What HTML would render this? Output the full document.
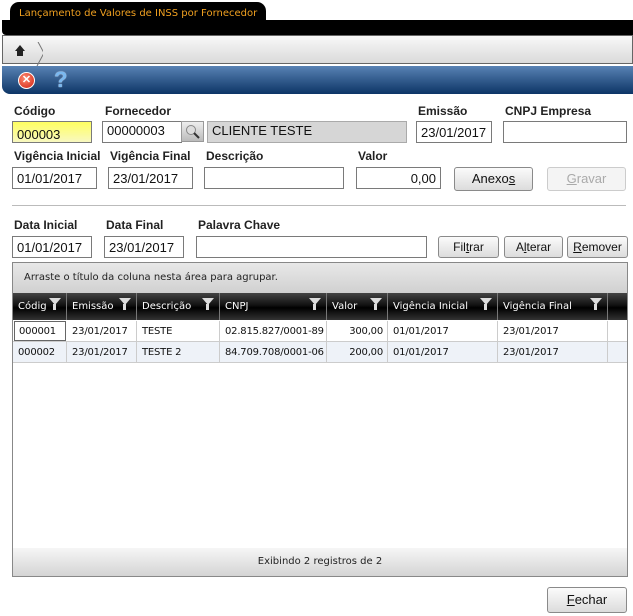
<html><head><style>
body{margin:0;width:633px;height:616px;background:#fff;position:relative;overflow:hidden;font-family:"Liberation Sans",Arial,sans-serif;}
.a{position:absolute}
.l{position:absolute;font-size:12px;font-weight:bold;color:#222}
.i{position:absolute;border:1px solid #7a7a7a;background:#fff;font-size:13px;box-sizing:border-box;padding:3px 4px;height:22px;color:#111}
.b{position:absolute;border:1px solid #8a8a8a;border-radius:3px;background:linear-gradient(#fbfbfb,#dcdcdc);font-size:12px;text-align:center;box-sizing:border-box;line-height:20px;color:#111}
.h{position:absolute;top:293px;height:27px;color:#fff;font-family:"DejaVu Sans",sans-serif;font-size:10px;line-height:27px;padding-left:5px;box-sizing:border-box;border-right:1px solid #777;white-space:nowrap}
.c{position:absolute;height:20px;line-height:21px;font-family:"DejaVu Sans",sans-serif;font-size:10px;padding-left:5px;box-sizing:border-box;border-right:1px solid #ccc;color:#111;white-space:nowrap;overflow:hidden;letter-spacing:-0.2px}
.f{position:absolute;top:5px;right:5px;width:0;height:0;border-left:6px solid transparent;border-right:6px solid transparent;border-top:7px solid #ddd}
.f:after{content:"";position:absolute;left:-2px;top:-1px;width:3px;height:6px;background:#ddd}
</style></head><body>
<div class="a" style="left:10px;top:2px;width:256px;height:22px;background:#000;border-radius:9px 9px 0 0"></div>
<div class="a" style="left:19px;top:8px;font-family:'DejaVu Sans',sans-serif;font-size:10px;color:#f0a020">Lançamento de Valores de INSS por Fornecedor</div>
<div class="a" style="left:2px;top:20px;width:631px;height:15px;background:#000;border-radius:0 0 0 4px"></div>
<div class="a" style="left:2px;top:35px;width:631px;height:29px;background:linear-gradient(#f8f8f8,#dadada);border:1px solid #666;box-sizing:border-box"></div>
<svg class="a" style="left:13px;top:42px" width="30" height="24"><path d="M2 9 L7 3 L12 9 L10 9 L10 14 L4 14 L4 9Z" fill="#222"/><path d="M24 -2 L31 11 L24 24" stroke="#777" fill="none"/></svg>
<div class="a" style="left:2px;top:66px;width:631px;height:28px;background:linear-gradient(#5882b4,#0d3566);border-radius:0 0 0 8px"></div>
<div class="a" style="left:18px;top:72px;width:15px;height:15px;border-radius:50%;background:radial-gradient(circle at 40% 35%,#ff8a70,#d02010);border:1px solid #fff;color:#fff;font-size:11px;font-weight:bold;text-align:center;line-height:15px">✕</div>
<div class="a" style="left:54px;top:67px;color:#7ab8f0;font-size:22px;font-weight:bold;text-shadow:0 0 1px #fff">?</div>

<div class="l" style="left:14px;top:104px">Código</div>
<div class="l" style="left:105px;top:104px">Fornecedor</div>
<div class="l" style="left:418px;top:104px">Emissão</div>
<div class="l" style="left:505px;top:104px">CNPJ Empresa</div>
<div class="i" style="left:12px;top:121px;width:80px;background:linear-gradient(#ffff60,#f8f8c0);padding-top:5px">000003</div>
<div class="i" style="left:102px;top:121px;width:80px;padding-top:1px">00000003</div>
<div class="a" style="left:181px;top:121px;width:23px;height:21px;background:linear-gradient(#eee,#bbb);border:1px solid #999;box-sizing:border-box"><svg width="21" height="19"><circle cx="9" cy="8" r="4.5" fill="#ddd" stroke="#888"/><path d="M12 11 L17 16" stroke="#333" stroke-width="2"/></svg></div>
<div class="i" style="left:207px;top:121px;width:200px;background:#d6d6d6;border-color:#aaa;padding-top:1px">CLIENTE TESTE</div>
<div class="i" style="left:416px;top:121px;width:76px">23/01/2017</div>
<div class="i" style="left:503px;top:121px;width:124px"></div>

<div class="l" style="left:14px;top:149px">Vigência Inicial</div>
<div class="l" style="left:110px;top:149px">Vigência Final</div>
<div class="l" style="left:206px;top:149px">Descrição</div>
<div class="l" style="left:358px;top:149px">Valor</div>
<div class="i" style="left:12px;top:167px;width:85px">01/01/2017</div>
<div class="i" style="left:108px;top:167px;width:85px">23/01/2017</div>
<div class="i" style="left:204px;top:167px;width:140px"></div>
<div class="i" style="left:356px;top:167px;width:85px;text-align:right">0,00</div>
<div class="b" style="left:454px;top:167px;width:79px;height:24px;line-height:22px;font-size:13px">Anexo<u>s</u></div>
<div class="b" style="left:547px;top:167px;width:79px;height:24px;line-height:22px;font-size:13px;color:#aaa;border-color:#ccc;background:#f4f4f4"><u>G</u>ravar</div>
<div class="a" style="left:12px;top:205px;width:614px;height:1px;background:#bbb"></div>

<div class="l" style="left:14px;top:218px">Data Inicial</div>
<div class="l" style="left:106px;top:218px">Data Final</div>
<div class="l" style="left:198px;top:218px">Palavra Chave</div>
<div class="i" style="left:12px;top:236px;width:80px">01/01/2017</div>
<div class="i" style="left:104px;top:236px;width:80px">23/01/2017</div>
<div class="i" style="left:196px;top:236px;width:231px"></div>
<div class="b" style="left:438px;top:236px;width:61px;height:22px">Fil<u>t</u>rar</div>
<div class="b" style="left:504px;top:236px;width:59px;height:22px">A<u>l</u>terar</div>
<div class="b" style="left:567px;top:236px;width:61px;height:22px"><u>R</u>emover</div>

<div class="a" style="left:12px;top:262px;width:616px;height:315px;border:1px solid #888;box-sizing:border-box"></div>
<div class="a" style="left:13px;top:263px;width:614px;height:30px;background:linear-gradient(#e8e8e8,#d0d0d0);font-family:'DejaVu Sans',sans-serif;font-size:10px;line-height:29px;padding-left:11px;box-sizing:border-box;color:#222">Arraste o título da coluna nesta área para agrupar.</div>
<div class="a" style="left:13px;top:293px;width:614px;height:27px;background:linear-gradient(#444 0%,#111 45%,#000 55%,#333 100%)"></div>
<div class="h" style="left:13px;width:54px">Códig<i class="f"></i></div>
<div class="h" style="left:67px;width:70px">Emissão<i class="f"></i></div>
<div class="h" style="left:137px;width:83px">Descrição<i class="f"></i></div>
<div class="h" style="left:220px;width:107px">CNPJ<i class="f"></i></div>
<div class="h" style="left:327px;width:61px">Valor<i class="f"></i></div>
<div class="h" style="left:388px;width:110px">Vigência Inicial<i class="f"></i></div>
<div class="h" style="left:498px;width:110px">Vigência Final<i class="f"></i></div>

<div class="a" style="left:13px;top:321px;width:614px;height:20px;border-bottom:1px solid #ccc"></div>
<div class="a" style="left:13px;top:342px;width:614px;height:20px;background:#eef2f8;border-bottom:1px solid #ccc"></div>
<div class="c" style="left:14px;top:321px;width:52px;border:1px solid #666;height:20px;line-height:19px;padding-left:4px">000001</div>
<div class="c" style="left:67px;top:321px;width:70px">23/01/2017</div>
<div class="c" style="left:137px;top:321px;width:83px">TESTE</div>
<div class="c" style="left:220px;top:321px;width:107px">02.815.827/0001-89</div>
<div class="c" style="left:327px;top:321px;width:61px;text-align:right;padding-right:4px">300,00</div>
<div class="c" style="left:388px;top:321px;width:110px">01/01/2017</div>
<div class="c" style="left:498px;top:321px;width:110px">23/01/2017</div>
<div class="c" style="left:13px;top:342px;width:54px">000002</div>
<div class="c" style="left:67px;top:342px;width:70px">23/01/2017</div>
<div class="c" style="left:137px;top:342px;width:83px">TESTE 2</div>
<div class="c" style="left:220px;top:342px;width:107px">84.709.708/0001-06</div>
<div class="c" style="left:327px;top:342px;width:61px;text-align:right;padding-right:4px">200,00</div>
<div class="c" style="left:388px;top:342px;width:110px">01/01/2017</div>
<div class="c" style="left:498px;top:342px;width:110px">23/01/2017</div>

<div class="a" style="left:13px;top:548px;width:614px;height:28px;background:linear-gradient(#f6f6f6,#d4d4d4);font-family:'DejaVu Sans',sans-serif;font-size:10px;text-align:center;line-height:28px;color:#222">Exibindo 2 registros de 2</div>
<div class="b" style="left:547px;top:587px;width:80px;height:26px;line-height:24px;font-size:13px"><u>F</u>echar</div>
</body></html>
